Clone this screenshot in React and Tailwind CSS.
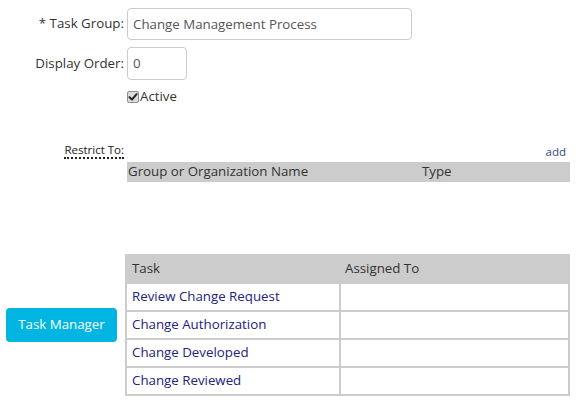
import React from "react";

const font = { fontFamily: '"Segoe UI", "Open Sans", "Noto Sans", sans-serif' };

function Check() {
  return (
    <span className="inline-flex items-center justify-center w-[12px] h-[12px] border border-[#8f8f8f] bg-[#dcdcdc] rounded-[2px]">
      <svg width="10" height="10" viewBox="0 0 10 10">
        <path d="M1.5 5.2 L4 7.6 L8.6 2.2" fill="none" stroke="#222" strokeWidth="2" strokeLinecap="round" strokeLinejoin="round" />
      </svg>
    </span>
  );
}

const tasks = ["Review Change Request", "Change Authorization", "Change Developed", "Change Reviewed"];

export default function App() {
  return (
    <div className="w-[580px] h-[403px] bg-white text-[13.3px] text-[#333] overflow-hidden" style={font}>
      <div className="flex items-center mt-[8px] h-[32px]">
        <div className="w-[127px] text-right pr-[3px]">* Task Group:</div>
        <div className="w-[285px] h-[32px] border border-[#ccc] rounded-[4px] flex items-center pl-[5px] pt-[1px] text-[#555]">
          Change Management Process
        </div>
      </div>
      <div className="flex items-center mt-[7px] h-[33px]">
        <div className="w-[127px] text-right pr-[3px]">Display Order:</div>
        <div className="w-[60px] h-[33px] border border-[#ccc] rounded-[4px] flex items-center pl-[5px] pt-[1px] text-[#555]">
          0
        </div>
      </div>
      <div className="flex items-center mt-[8px] h-[18px] pl-[127px]">
        <Check />
        <span className="ml-[1px]">Active</span>
      </div>
      <div className="flex items-end mt-[35px] h-[18px] pr-[14px]">
        <div className="w-[127px] flex justify-end pr-[3px]">
          <span className="text-[11.5px] leading-[14px] border-b-2 border-dotted border-[#222] text-[#222]">Restrict To:</span>
        </div>
        <div className="flex-1 text-right text-[11.5px] leading-[14px] text-[#34468a]">add</div>
      </div>
      <div className="ml-[127px] mt-[3px] w-[443px] h-[20px] bg-[#cccccc] flex items-center text-[#333]">
        <div className="w-[295px] pl-[1px]">Group or Organization Name</div>
        <div>Type</div>
      </div>
      <div className="flex items-center mt-[72px]">
        <div className="w-[125px] pl-[6px]">
          <div className="w-[111px] h-[34px] rounded-[4px] bg-[#00b5e2] text-white flex items-center justify-center font-medium">
            Task Manager
          </div>
        </div>
        <div className="w-[445px] bg-[#cccccc] p-[2px] grid grid-cols-[212px_227px] gap-[2px]">
          <div className="h-[26px] flex items-center pl-[5px] text-[#333]">Task</div>
          <div className="h-[26px] flex items-center pl-[4px] text-[#333]">Assigned To</div>
          {tasks.map((t) => (
            <React.Fragment key={t}>
              <div className="h-[26px] bg-white flex items-center pl-[5px] text-[#22227d]">{t}</div>
              <div className="h-[26px] bg-white"></div>
            </React.Fragment>
          ))}
        </div>
      </div>
    </div>
  );
}
